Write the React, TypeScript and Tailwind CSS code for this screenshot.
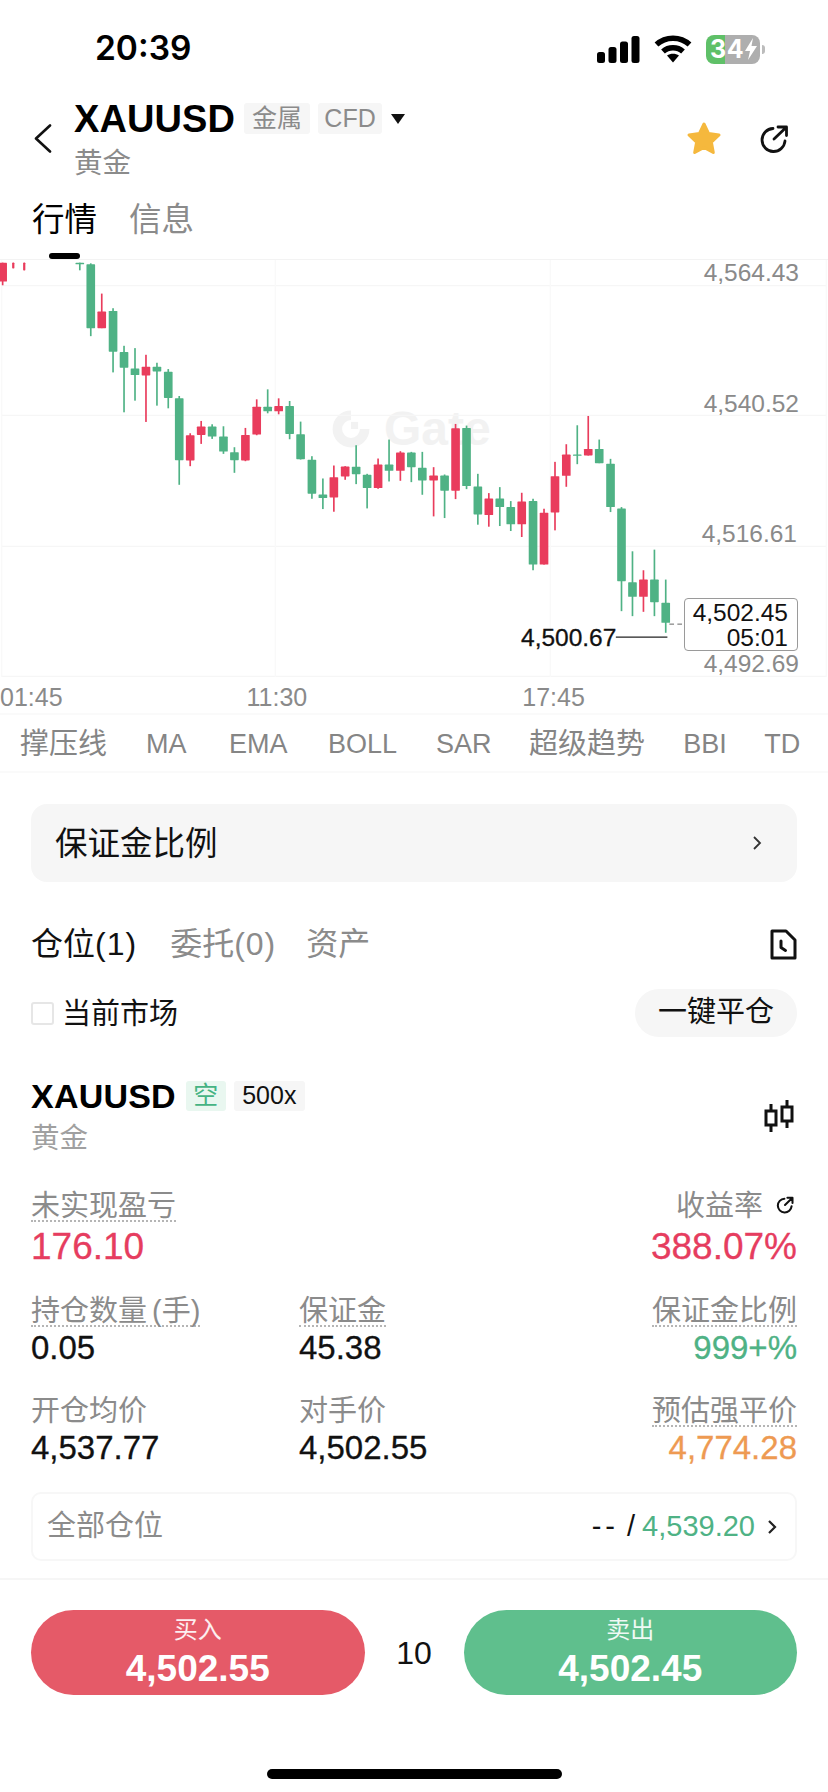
import React from "react";

type Candle = [number, number, number, number, number, "r" | "g"];

// x, wick top, body top, body bottom, wick bottom (chart px x3)
const CANDLES: Candle[] = [
  [5, 35, 35, 92, 103, "r"],
  [37, 35, 35, 52, 52, "r"],
  [70, 35, 35, 58, 58, "r"],
  [237, 35, 35, 40, 58, "g"],
  [270, 37, 40, 232, 256, "g"],
  [303, 128, 182, 232, 232, "r"],
  [337, 172, 180, 303, 365, "g"],
  [370, 285, 304, 351, 485, "g"],
  [403, 292, 353, 373, 450, "g"],
  [436, 312, 348, 374, 514, "r"],
  [469, 336, 348, 362, 465, "g"],
  [503, 355, 363, 442, 473, "g"],
  [536, 436, 443, 629, 703, "g"],
  [569, 548, 554, 630, 647, "r"],
  [602, 511, 528, 553, 580, "r"],
  [635, 521, 528, 558, 565, "g"],
  [669, 527, 558, 603, 610, "g"],
  [702, 590, 605, 629, 667, "g"],
  [735, 532, 553, 630, 632, "r"],
  [769, 446, 468, 552, 554, "r"],
  [802, 416, 468, 482, 488, "g"],
  [835, 443, 466, 482, 491, "r"],
  [868, 451, 466, 550, 566, "g"],
  [901, 513, 551, 626, 627, "g"],
  [935, 617, 628, 730, 745, "g"],
  [968, 684, 732, 743, 776, "g"],
  [1001, 645, 680, 741, 784, "r"],
  [1035, 647, 648, 678, 688, "r"],
  [1068, 584, 649, 671, 701, "g"],
  [1101, 670, 673, 713, 774, "g"],
  [1134, 624, 642, 713, 715, "r"],
  [1167, 567, 642, 661, 693, "g"],
  [1201, 602, 606, 661, 691, "r"],
  [1234, 604, 606, 650, 695, "g"],
  [1267, 604, 652, 690, 733, "g"],
  [1301, 650, 675, 690, 798, "r"],
  [1334, 672, 675, 721, 803, "g"],
  [1367, 520, 533, 721, 746, "r"],
  [1400, 525, 532, 707, 716, "g"],
  [1434, 670, 708, 792, 823, "g"],
  [1467, 728, 744, 794, 829, "r"],
  [1500, 710, 744, 770, 827, "g"],
  [1533, 752, 770, 822, 842, "g"],
  [1566, 727, 753, 822, 860, "r"],
  [1600, 745, 752, 943, 960, "g"],
  [1633, 775, 787, 943, 943, "r"],
  [1666, 634, 677, 786, 840, "r"],
  [1700, 581, 612, 676, 709, "r"],
  [1733, 524, 612, 614, 641, "g"],
  [1766, 496, 595, 615, 615, "r"],
  [1799, 567, 595, 638, 638, "g"],
  [1833, 625, 640, 770, 785, "g"],
  [1866, 770, 774, 993, 1083, "g"],
  [1899, 903, 996, 1040, 1098, "g"],
  [1932, 960, 988, 1040, 1085, "r"],
  [1965, 898, 988, 1056, 1098, "g"],
  [1999, 988, 1058, 1118, 1148, "g"],
];

const INDICATORS = [
  { t: "撑压线", cls: "text-[29px]" },
  { t: "MA", cls: "ml-[39px] text-[27px]" },
  { t: "EMA", cls: "ml-[42.5px] text-[27px]" },
  { t: "BOLL", cls: "ml-[40.5px] text-[27px]" },
  { t: "SAR", cls: "ml-[39px] text-[27px]" },
  { t: "超级趋势", cls: "ml-[37.5px] text-[29px]" },
  { t: "BBI", cls: "ml-[38px] text-[27px]" },
  { t: "TD", cls: "ml-[37.5px] text-[27px]" },
];

function ChartSvg() {
  return (
    <svg viewBox="0 27 2484 1254" className="absolute inset-0 h-full w-full">
      {[104, 494, 888, 1279].map((y) => (
        <line key={y} x1="0" x2="2484" y1={y} y2={y} stroke="#f6f6f6" strokeWidth="4" />
      ))}
      {[2, 825, 1652, 2482].map((x) => (
        <line key={x} x1={x} x2={x} y1="27" y2="1281" stroke="#f9f9f9" strokeWidth="4" />
      ))}
      {CANDLES.map(([x, wt, bt, bb, wb, c]) => {
        const col = c === "r" ? "#e93c5c" : "#4fb285";
        const thin = x < 100;
        return (
          <g key={x}>
            <rect x={x - 2.5} y={wt} width="5" height={wb - wt} fill={col} />
            <rect
              x={thin && x > 20 ? x - 3 : x - 13}
              y={bt}
              width={thin && x > 20 ? 6 : 26}
              height={Math.max(bb - bt, 4)}
              rx="2"
              fill={col}
            />
          </g>
        );
      })}
      <line x1="1849" x2="2004" y1="1161" y2="1161" stroke="#222" strokeWidth="4" />
      <line x1="2010" x2="2049" y1="1122" y2="1122" stroke="#666" strokeWidth="3" strokeDasharray="14 10" />
    </svg>
  );
}

function Metric({
  label,
  value,
  color = "text-[#111]",
  right,
  dotted = true,
  big,
  icon,
}: {
  label: string;
  value: string;
  color?: string;
  right?: boolean;
  dotted?: boolean;
  big?: boolean;
  icon?: React.ReactNode;
}) {
  return (
    <div className={`flex flex-col ${right ? "items-end" : "items-start"}`}>
      <div className="flex items-center">
        <span
          className={`h-[34px] pt-[2px] text-[29px] leading-[32px] text-[#8b8b8b] [word-spacing:-3px] ${
            dotted ? "border-b-2 border-dotted border-[#b5b5b5]" : ""
          }`}
        >
          {label}
        </span>
        {icon}
      </div>
      <span
        className={`${big ? "mt-[5px] h-[40px] text-[37px] leading-[40px]" : "mt-[1px] h-[40px] text-[33px] leading-[40px]"} ${color} [-webkit-text-stroke:0.3px]`}
      >
        {value}
      </span>
    </div>
  );
}

function Refresh({ size, sw }: { size: number; sw: number }) {
  return (
    <svg width={size} height={size} viewBox="0 0 30 30" fill="none" stroke="#111" strokeWidth={sw} strokeLinecap="round" strokeLinejoin="round">
      <path d="M14 4.5A11.5 11.5 0 1 0 26 17" />
      <path d="M15 15L27 3.5M19 3h8.5v8.5" />
    </svg>
  );
}

function TradeButton({ label, price, bg }: { label: string; price: string; bg: string }) {
  return (
    <div className={`flex h-[85px] w-[333.5px] flex-col items-center rounded-full text-white ${bg}`}>
      <span className="mt-[5px] h-[30px] text-[24px] leading-[30px] text-white/90">{label}</span>
      <span className="mt-[3px] text-[37px] font-bold leading-[42px]">{price}</span>
    </div>
  );
}

export default function App() {
  return (
    <div className="h-[1792px] w-[828px] overflow-hidden bg-white text-[#111] [font-family:'Liberation_Sans','Noto_Sans_CJK_SC',sans-serif]">
      {/* status bar */}
      <div className="flex h-[98px] items-center pl-[95px] pr-[63px]">
        <span className="text-[33.5px] font-semibold leading-none text-black [font-family:Inter,sans-serif]">20:39</span>
        <div className="ml-auto flex items-center">
          <svg width="43" height="27" viewBox="0 0 43 27" fill="#000">
            <rect x="0" y="16" width="8" height="11" rx="2.5" />
            <rect x="11.5" y="11" width="8" height="16" rx="2.5" />
            <rect x="23" y="5.5" width="8" height="21.5" rx="2.5" />
            <rect x="34.5" y="0" width="8" height="27" rx="2.5" />
          </svg>
          <svg className="ml-[14px]" width="38" height="28" viewBox="0 0 38 28" fill="none" stroke="#000" strokeWidth="5.5">
            <path d="M2.5 9.5C11.5 1 26.5 1 35.5 9.5" />
            <path d="M9 16.5C14.5 11.5 23.5 11.5 29 16.5" />
            <path d="M13 20.5L19 27.5L25 20.5C21.5 18 16.5 18 13 20.5Z" fill="#000" stroke="none" />
          </svg>
          <div className="ml-[14px] flex h-[29px] w-[54px] items-center justify-start overflow-hidden rounded-[8px] bg-[linear-gradient(90deg,#5fc068_36%,#aeaeae_36%)] pl-[4px]">
            <span className="text-[25px] font-bold leading-none tracking-[0.5px] text-white [font-family:Inter,sans-serif]">34</span>
            <svg className="ml-[1px] shrink-0" width="12" height="22" viewBox="0 0 12 22" fill="#fff">
              <path d="M8 0L0 13h5l-2 9 9-14H6.500z" />
            </svg>
          </div>
          <div className="ml-[2px] h-[9px] w-[3px] rounded-r-full bg-[#bcbcbc]" />
        </div>
      </div>

      {/* header */}
      <div className="flex h-[92px] items-start pl-[34px] pr-[39px]">
        <svg className="mt-[26px]" width="18" height="29" viewBox="0 0 18 29" fill="none" stroke="#111" strokeWidth="2.6" strokeLinecap="round" strokeLinejoin="round">
          <path d="M16 1.5L2 14.5L16 27.5" />
        </svg>
        <div className="ml-[22px] flex flex-col pt-[5px]">
          <div className="flex h-[31px] items-center">
            <span className="text-[38px] font-bold leading-none tracking-[0.1px] text-black">XAUUSD</span>
            <span className="ml-[9px] flex h-[31px] w-[66px] items-center justify-center rounded-[3px] bg-[#f6f6f6] text-[25px] text-[#8b8b8b]">金属</span>
            <span className="ml-[8px] flex h-[31px] w-[64px] items-center justify-center rounded-[3px] bg-[#f6f6f6] text-[25px] text-[#8b8b8b]">CFD</span>
            <svg className="ml-[9px]" width="14" height="10" viewBox="0 0 14 10" fill="#111">
              <path d="M0 0h14L7 10z" />
            </svg>
          </div>
          <span className="mt-[12px] text-[28.5px] leading-[34px] text-[#8b8b8b]">黄金</span>
        </div>
        <svg className="ml-auto mt-[23px]" width="36" height="34" viewBox="0 0 36 34" fill="#f5b83d" stroke="#f5b83d" strokeWidth="3" strokeLinejoin="round">
          <path d="M18 3l4.600 9.600 10.400 1.400-7.600 7.200 1.900 10.300L18 26.500l-9.300 5 1.900-10.300L3 14l10.400-1.400z" />
        </svg>
        <div className="ml-[37px] mt-[26px]">
          <Refresh size={30} sw={2.8} />
        </div>
      </div>

      {/* tabs */}
      <div className="flex h-[63px] items-center gap-[32px] pb-[3px] pl-[32px] text-[32.5px] leading-none">
        <span className="text-black">行情</span>
        <span className="text-[#8b8b8b]">信息</span>
      </div>
      <div className="ml-[49px] h-[6px] w-[31px] rounded-full bg-black" />

      {/* chart */}
      <div className="relative h-[418px] border-t border-[#f3f3f3]">
        <div className="absolute left-[332px] top-[145px] flex items-center gap-[14px] text-[#f2f2f2]">
          <svg width="38" height="38" viewBox="0 0 32 32" fill="none" stroke="#f2f2f2" strokeWidth="8">
            <path d="M16 4.500A11.500 11.500 0 1 0 27.500 16" />
            <rect x="16" y="10" width="6" height="6" fill="#f2f2f2" stroke="none" />
          </svg>
          <span className="text-[48px] font-bold leading-none">Gate</span>
        </div>
        <ChartSvg />
        <span className="absolute right-[29px] top-[1px] text-[24.5px] leading-[24px] text-[#8a8a8a]">4,564.43</span>
        <span className="absolute right-[29px] top-[132px] text-[24.5px] leading-[24px] text-[#8a8a8a]">4,540.52</span>
        <span className="absolute right-[31px] top-[262px] text-[24.5px] leading-[24px] text-[#8a8a8a]">4,516.61</span>
        <span className="absolute right-[29px] top-[392px] text-[24.5px] leading-[24px] text-[#8a8a8a]">4,492.69</span>
        <span className="absolute left-[521px] top-[366px] text-[24.5px] leading-[24px] text-[#111] [-webkit-text-stroke:0.3px]">4,500.67</span>
        <div className="absolute left-[684px] top-[338px] flex h-[53px] w-[114px] flex-col items-end rounded-[4px] border border-[#9a9a9a] bg-white pr-[9px] pt-[1px] text-[24.5px] leading-[25px] text-[#111]">
          <span>4,502.45</span>
          <span>05:01</span>
        </div>
      </div>

      {/* time axis */}
      <div className="flex h-[36px] items-center pt-[4px] text-[25px] leading-none text-[#8a8a8a]">
        <span>01:45</span>
        <span className="ml-[184px]">11:30</span>
        <span className="ml-[215px]">17:45</span>
      </div>

      {/* indicators */}
      <div className="flex h-[60px] items-center whitespace-nowrap border-y-2 border-[#fafafa] pl-[20px] pt-[3px] leading-none text-[#858585]">
        {INDICATORS.map((i) => (
          <span key={i.t} className={i.cls}>
            {i.t}
          </span>
        ))}
      </div>

      {/* margin ratio */}
      <div className="mx-[31px] mt-[31px] flex h-[78px] items-center justify-between rounded-[16px] bg-[#f6f6f6] pl-[24px] pr-[35px]">
        <span className="pt-[2px] text-[32.5px] leading-none text-[#111]">保证金比例</span>
        <svg width="10" height="14" viewBox="0 0 10 14" fill="none" stroke="#333" strokeWidth="1.800">
          <path d="M2 1l6 6-6 6" />
        </svg>
      </div>

      {/* position tabs */}
      <div className="mx-[31px] mt-[41px] flex h-[40px] items-center pt-[2px] text-[32px] leading-none">
        <span className="text-[#111]">
          仓位<span className="tracking-[1px]">(1)</span>
        </span>
        <span className="ml-[33px] text-[#8b8b8b]">
          委托<span className="tracking-[1px]">(0)</span>
        </span>
        <span className="ml-[30px] text-[#8b8b8b]">资产</span>
        <svg className="ml-auto" width="27" height="31" viewBox="0 0 27 31" fill="none" stroke="#111" strokeWidth="3" strokeLinejoin="round" strokeLinecap="round">
          <path d="M2 2h14l9 9v18H2z" />
          <path d="M11 12v6.500l4.500 3" />
        </svg>
      </div>

      {/* current market */}
      <div className="mx-[31px] mt-[26px] flex h-[48px] items-center">
        <div className="h-[23px] w-[23px] rounded-[3px] border-2 border-[#e6e6e6]" />
        <span className="ml-[8px] pt-[2px] text-[29px] leading-none text-[#111]">当前市场</span>
        <span className="ml-auto flex h-[48px] w-[162px] items-center justify-center rounded-full bg-[#f6f6f6] text-[29px] text-[#111]">一键平仓</span>
      </div>

      {/* position head */}
      <div className="mx-[31px] mt-[44px] flex items-start">
        <div className="flex flex-col">
          <div className="flex h-[30px] items-center">
            <span className="text-[34px] font-bold leading-none tracking-[0.2px] text-black">XAUUSD</span>
            <span className="ml-[10px] flex h-[30px] w-[40px] items-center justify-center rounded-[3px] bg-[#e9f7f0] text-[25px] text-[#45b383]">空</span>
            <span className="ml-[8px] flex h-[30px] w-[71px] items-center justify-center rounded-[3px] bg-[#f6f6f6] text-[25px] text-[#111]">500x</span>
          </div>
          <span className="mb-[1px] mt-[11px] text-[28.5px] leading-[32px] text-[#a0a0a0]">黄金</span>
        </div>
        <svg className="ml-auto mr-[2px] mt-[19px]" width="31" height="32" viewBox="0 0 31 32" fill="none" stroke="#111" strokeWidth="3">
          <path d="M7 4v7M7 25v7M23 0v7M23 21v7" />
          <rect x="2" y="11" width="10" height="14" />
          <rect x="18" y="7" width="10" height="14" />
        </svg>
      </div>

      {/* metrics */}
      <div className="mx-[31px] mt-[33px] flex flex-col">
        <div className="flex h-[105px] items-start justify-between">
          <Metric label="未实现盈亏" value="176.10" color="text-[#e63d5f]" big />
          <Metric
            label="收益率"
            value="388.07%"
            color="text-[#e63d5f]"
            right
            big
            dotted={false}
            icon={
              <span className="ml-[13px] mr-[3px]">
                <Refresh size={18} sw={3.4} />
              </span>
            }
          />
        </div>
        <div className="flex h-[100px] items-start">
          <div className="w-[268px]">
            <Metric label="持仓数量 (手)" value="0.05" />
          </div>
          <Metric label="保证金" value="45.38" />
          <div className="ml-auto">
            <Metric label="保证金比例" value="999+%" color="text-[#4fb285]" right />
          </div>
        </div>
        <div className="flex h-[99px] items-start">
          <div className="w-[268px]">
            <Metric label="开仓均价" value="4,537.77" dotted={false} />
          </div>
          <Metric label="对手价" value="4,502.55" dotted={false} />
          <div className="ml-auto">
            <Metric label="预估强平价" value="4,774.28" color="text-[#ee9a52]" right />
          </div>
        </div>
      </div>

      {/* all positions */}
      <div className="mx-[31px] flex h-[69px] items-center rounded-[10px] border-2 border-[#f7f7f7] pl-[14px] pr-[18px]">
        <span className="text-[29px] leading-none text-[#8b8b8b]">全部仓位</span>
        <span className="ml-auto text-[29px] leading-none text-[#111]">
          <span className="tracking-[4px]">--</span> /
        </span>
        <span className="ml-[7px] text-[29px] leading-none text-[#4fb285]">4,539.20</span>
        <svg className="ml-[12px]" width="10" height="16" viewBox="0 0 10 16" fill="none" stroke="#222" strokeWidth="2.200">
          <path d="M2 2l6 6-6 6" />
        </svg>
      </div>

      <div className="mt-[17px] h-[2px] bg-[#f6f6f6]" />

      {/* trade buttons */}
      <div className="mx-[31px] mt-[30px] flex items-center">
        <TradeButton label="买入" price="4,502.55" bg="bg-[#e55a68]" />
        <span className="flex-1 text-center text-[32px] leading-none text-[#111]">10</span>
        <TradeButton label="卖出" price="4,502.45" bg="bg-[#5fbf8d]" />
      </div>

      <div className="mx-auto mt-[74px] h-[10px] w-[295px] rounded-full bg-black" />
    </div>
  );
}
